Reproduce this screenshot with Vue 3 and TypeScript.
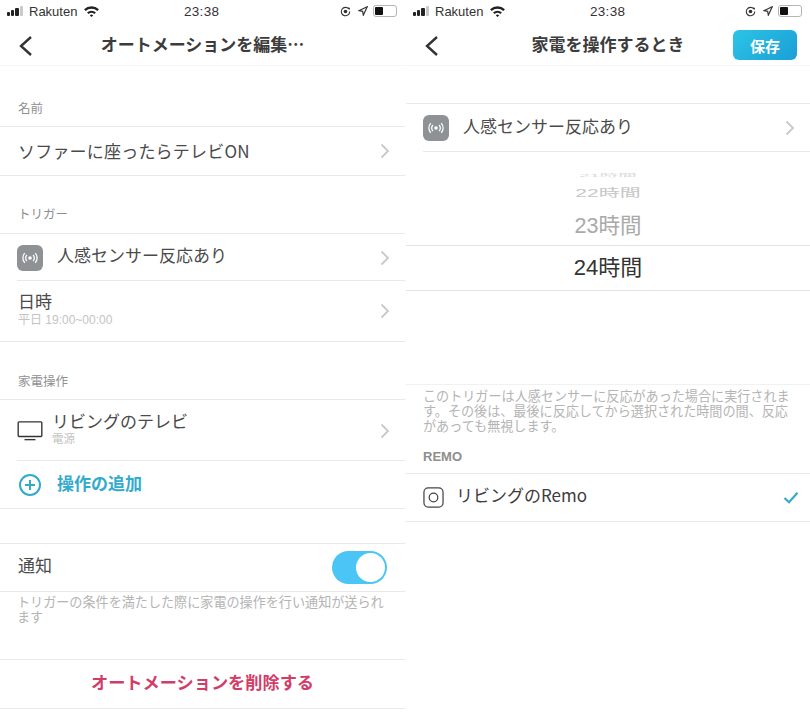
<script setup lang="ts">
const wifiPaths = [
  'M1 4.6a11.6 11.6 0 0 1 16 0l-1.7 1.8a9.2 9.2 0 0 0-12.6 0z',
  'M4.2 8a7 7 0 0 1 9.6 0l-1.7 1.8a4.6 4.6 0 0 0-6.2 0z',
  'M7.2 11.2a2.6 2.6 0 0 1 3.6 0L9 13z',
]
</script>

<template>
  <div class="screen">
    <!-- 左: オートメーション編集 -->
    <section class="phone">
      <div class="status">
        <div class="status_left">
          <span class="bars"><i class="b1"></i><i class="b2"></i><i class="b3"></i><i class="b4"></i></span>
          <span class="carrier">Rakuten</span>
          <svg class="wifi" viewBox="0 0 18 14"><path v-for="d in wifiPaths" :key="d" :d="d" /></svg>
        </div>
        <span class="clock">23:38</span>
        <div class="status_right">
          <svg class="lock" viewBox="0 0 12 12"><path d="M9.6 3.2A4.6 4.6 0 1 0 10.6 6" /><circle cx="6" cy="6" r="2" /><path class="fill" d="M8.4 1.4l2.6.8-1 2.4z" /></svg>
          <svg class="arrow" viewBox="0 0 12 12"><path d="M11 1L1 5.6l4.6.8.8 4.6z" /></svg>
          <span class="battery"><i></i></span>
        </div>
      </div>
      <header class="nav">
        <svg class="back" viewBox="0 0 16 22"><path d="M13 2L3 11l10 9" /></svg>
        <h1 class="nav_title">オートメーションを編集…</h1>
      </header>

      <div class="label first">名前</div>
      <div class="group">
        <div class="row name_row">
          <span class="row_text wide">ソファーに座ったらテレビON</span>
          <svg class="chev" viewBox="0 0 10 16"><path d="M1.5 1.5L8 8l-6.5 6.5" /></svg>
        </div>
      </div>

      <div class="label trig">トリガー</div>
      <div class="group">
        <div class="row sensor_row inset">
          <span class="sensor">
            <svg viewBox="0 0 20 20"><circle cx="10" cy="10" r="2" class="dot" /><path d="M6.6 6.6a4.8 4.8 0 0 0 0 6.8M13.4 6.6a4.8 4.8 0 0 1 0 6.8M4.2 4.6a8 8 0 0 0 0 10.8M15.8 4.6a8 8 0 0 1 0 10.8" /></svg>
          </span>
          <span class="row_text lift">人感センサー反応あり</span>
          <svg class="chev" viewBox="0 0 10 16"><path d="M1.5 1.5L8 8l-6.5 6.5" /></svg>
        </div>
        <div class="row date_row">
          <div class="stack">
            <span class="row_text">日時</span>
            <span class="sub">平日 19:00~00:00</span>
          </div>
          <svg class="chev" viewBox="0 0 10 16"><path d="M1.5 1.5L8 8l-6.5 6.5" /></svg>
        </div>
      </div>

      <div class="label">家電操作</div>
      <div class="group">
        <div class="row tv_row inset">
          <svg class="tv" viewBox="0 0 28 22"><rect x="1" y="1" width="26" height="16" rx="1" /><path d="M8 20.5h12" /></svg>
          <div class="stack">
            <span class="row_text">リビングのテレビ</span>
            <span class="sub small">電源</span>
          </div>
          <svg class="chev" viewBox="0 0 10 16"><path d="M1.5 1.5L8 8l-6.5 6.5" /></svg>
        </div>
        <div class="row add_row">
          <svg class="plus" viewBox="0 0 24 24"><circle cx="12" cy="12" r="10" /><path d="M12 7v10M7 12h10" /></svg>
          <span class="add_text lift">操作の追加</span>
        </div>
      </div>

      <div class="group notify">
        <div class="row notify_row">
          <span class="row_text lift">通知</span>
          <span class="toggle"><i></i></span>
        </div>
      </div>
      <p class="note note_left">トリガーの条件を満たした際に家電の操作を行い通知が送られます</p>

      <div class="group">
        <div class="row delete_row"><span class="lift">オートメーションを削除する</span></div>
      </div>
    </section>

    <!-- 右: 家電を操作するとき -->
    <section class="phone phone_right">
      <div class="status">
        <div class="status_left">
          <span class="bars"><i class="b1"></i><i class="b2"></i><i class="b3"></i><i class="b4"></i></span>
          <span class="carrier">Rakuten</span>
          <svg class="wifi" viewBox="0 0 18 14"><path v-for="d in wifiPaths" :key="d" :d="d" /></svg>
        </div>
        <span class="clock">23:38</span>
        <div class="status_right">
          <svg class="lock" viewBox="0 0 12 12"><path d="M9.6 3.2A4.6 4.6 0 1 0 10.6 6" /><circle cx="6" cy="6" r="2" /><path class="fill" d="M8.4 1.4l2.6.8-1 2.4z" /></svg>
          <svg class="arrow" viewBox="0 0 12 12"><path d="M11 1L1 5.6l4.6.8.8 4.6z" /></svg>
          <span class="battery"><i></i></span>
        </div>
      </div>
      <header class="nav">
        <svg class="back" viewBox="0 0 16 22"><path d="M13 2L3 11l10 9" /></svg>
        <h1 class="nav_title">家電を操作するとき</h1>
        <button class="save">保存</button>
      </header>

      <div class="top_gap"></div>
      <div class="group no_bottom">
        <div class="row sensor_row tall inset">
          <span class="sensor">
            <svg viewBox="0 0 20 20"><circle cx="10" cy="10" r="2" class="dot" /><path d="M6.6 6.6a4.8 4.8 0 0 0 0 6.8M13.4 6.6a4.8 4.8 0 0 1 0 6.8M4.2 4.6a8 8 0 0 0 0 10.8M15.8 4.6a8 8 0 0 1 0 10.8" /></svg>
          </span>
          <span class="row_text lift">人感センサー反応あり</span>
          <svg class="chev" viewBox="0 0 10 16"><path d="M1.5 1.5L8 8l-6.5 6.5" /></svg>
        </div>
      </div>

      <div class="picker">
        <div class="pick p21">21時間</div>
        <div class="pick p22">22時間</div>
        <div class="pick p23">23時間</div>
        <div class="pick p24">24時間</div>
      </div>

      <p class="note note_right">このトリガーは人感センサーに反応があった場合に実行されます。その後は、最後に反応してから選択された時間の間、反応があっても無視します。</p>
      <div class="remo_label">REMO</div>
      <div class="group">
        <div class="row remo_row">
          <svg class="remo" viewBox="0 0 22 22"><rect x="1" y="1" width="20" height="20" rx="4.5" /><circle cx="11" cy="11" r="4.5" /></svg>
          <span class="row_text dark lift">リビングのRemo</span>
          <svg class="check" viewBox="0 0 16 13"><path d="M1.5 7l4.5 4.2L14.5 1.8" /></svg>
        </div>
      </div>
    </section>
  </div>
</template>

<style scoped>
.screen {
  display: flex;
  width: 810px;
  height: 719px;
  overflow: hidden;
  background: #fff;
  font-family: "Noto Sans CJK JP", "Liberation Sans", sans-serif;
  color: #3a3a3a;
}

.phone {
  width: 405px;
  flex: none;
  display: flex;
  flex-direction: column;
  box-sizing: border-box;
}
.phone_right {
  padding-left: 1px;
}

/* ステータスバー */
.status {
  height: 22px;
  display: flex;
  align-items: center;
  justify-content: space-between;
  padding: 0 8px 0 7px;
  position: relative;
  font-family: "Liberation Sans", sans-serif;
  font-size: 13px;
  color: #333;
}
.status_left,
.status_right {
  display: flex;
  align-items: center;
}
.bars {
  display: flex;
  align-items: flex-end;
  gap: 1px;
  width: 16px;
  height: 10px;
  margin-right: 6px;
}
.bars i {
  width: 3.2px;
  background: #222;
  border-radius: 1px;
}
.bars .b1 { height: 4px; }
.bars .b2 { height: 6px; }
.bars .b3 { height: 8px; }
.bars .b4 { height: 10px; background: #c9c9c9; }
.wifi {
  width: 17px;
  height: 13px;
  margin-left: 6px;
  fill: #222;
}
.clock {
  position: absolute;
  left: 184px;
  font-size: 13.5px;
  font-weight: 500;
  letter-spacing: 0.3px;
}
.lock {
  width: 11px;
  height: 11px;
  fill: none;
  stroke: #333;
  stroke-width: 1.2;
  margin-right: 7px;
}
.lock .fill {
  fill: #333;
  stroke: none;
}
.lock circle {
  fill: #333;
  stroke: none;
}
.arrow {
  width: 10px;
  height: 10px;
  fill: none;
  stroke: #333;
  stroke-width: 1.4;
  margin-right: 5px;
}
.battery {
  width: 24px;
  height: 12px;
  border: 1px solid #b5b5b5;
  border-radius: 3px;
  padding: 1px;
  box-sizing: border-box;
  display: flex;
}
.battery i {
  width: 8px;
  background: #111;
  border-radius: 1px;
}

/* ナビゲーション */
.nav {
  height: 43px;
  display: flex;
  align-items: center;
  justify-content: center;
  position: relative;
  border-bottom: 1px solid #f6f6f6;
  box-sizing: content-box;
}
.back {
  position: absolute;
  left: 18px;
  top: 13px;
  width: 16px;
  height: 22px;
  fill: none;
  stroke: #333;
  stroke-width: 2.4;
}
.nav_title {
  margin: 0;
  font-size: 17px;
  font-weight: 700;
  color: #3c3c3c;
}
.save {
  position: absolute;
  right: 13px;
  top: 8px;
  width: 64px;
  height: 30px;
  border: none;
  border-radius: 6px;
  background: linear-gradient(135deg, #2cc4e6, #1a9fd6);
  color: #fff;
  font-family: inherit;
  font-size: 15px;
  font-weight: 700;
  padding: 0;
}

/* セクション */
.label {
  height: 57px;
  box-sizing: border-box;
  display: flex;
  align-items: flex-end;
  padding: 0 0 10px 18px;
  font-size: 12.5px;
  line-height: 16px;
  color: #8f8f8f;
}
.label.first {
  height: 60px;
}
.label.trig {
  padding-bottom: 11px;
}
.group {
  border-top: 1px solid #e9e9e9;
  border-bottom: 1px solid #e9e9e9;
}
.no_bottom {
  border-bottom: none;
}
.row {
  display: flex;
  align-items: center;
  padding-left: 18px;
  position: relative;
  box-sizing: border-box;
}
.inset::after {
  content: "";
  position: absolute;
  left: 17px;
  right: 0;
  bottom: 0;
  height: 1px;
  background: #e9e9e9;
}
.row_text {
  font-size: 17px;
  line-height: 20px;
  color: #4a4a4a;
}
.wide {
  letter-spacing: 0.2px;
}
.lift {
  margin-bottom: 5px;
}
.dark {
  color: #3d3d3d;
}
.chev {
  position: absolute;
  right: 15px;
  top: 50%;
  width: 10px;
  height: 16px;
  margin-top: -8px;
  fill: none;
  stroke: #c9c9c9;
  stroke-width: 1.8;
}
.name_row {
  height: 48px;
}
.sensor_row {
  height: 47px;
}
.sensor_row.tall {
  height: 48px;
}
.date_row {
  height: 60px;
}
.tv_row {
  height: 61px;
}
.add_row {
  height: 47px;
}
.notify_row {
  height: 47px;
}
.delete_row {
  height: 48px;
  padding: 0;
  justify-content: center;
  font-size: 17.2px;
  font-weight: 700;
  color: #d23d68;
}
.stack {
  display: flex;
  flex-direction: column;
  padding-bottom: 4px;
}
.sub {
  margin-top: 2px;
  font-size: 12px;
  line-height: 14px;
  color: #c4c4c4;
  font-family: "Liberation Sans", "Noto Sans CJK JP", sans-serif;
}
.sub.small {
  font-size: 11.5px;
  line-height: 13px;
}

/* アイコン */
.sensor {
  width: 26px;
  height: 26px;
  border-radius: 6px;
  background: #8e9294;
  margin-right: 14px;
  margin-left: -1px;
  display: flex;
  align-items: center;
  justify-content: center;
}
.sensor svg {
  width: 18px;
  height: 18px;
  fill: none;
  stroke: #fff;
  stroke-width: 1.4;
}
.sensor .dot {
  fill: #fff;
  stroke: none;
}
.tv {
  width: 26px;
  height: 20px;
  margin: 0 9px 0 -1px;
  fill: none;
  stroke: #333;
  stroke-width: 1.5;
}
.plus {
  width: 24px;
  height: 24px;
  margin-right: 15px;
  fill: none;
  stroke: #31aacb;
  stroke-width: 2;
}
.add_text {
  font-size: 17px;
  font-weight: 700;
  color: #33abcc;
}

/* 通知 */
.notify {
  margin-top: 34px;
}
.toggle {
  position: absolute;
  right: 18px;
  top: 7px;
  width: 55px;
  height: 33px;
  border-radius: 17px;
  background: #4bc4f6;
  display: flex;
  align-items: center;
  justify-content: flex-end;
  padding-right: 2px;
  box-sizing: border-box;
}
.toggle i {
  width: 29px;
  height: 29px;
  border-radius: 50%;
  background: #fff;
}
.note {
  margin: 0;
  font-size: 13.1px;
  line-height: 15px;
  color: #b4b4b4;
}
.note_left {
  height: 67px;
  padding: 2px 18px 0 17px;
  box-sizing: border-box;
}

/* 右カラム */
.top_gap {
  height: 37px;
}
.picker {
  height: 233px;
  position: relative;
  border-bottom: 1px solid #f1f1f1;
  box-sizing: border-box;
}
.picker::before {
  content: "";
  position: absolute;
  left: 0;
  right: 0;
  top: 93px;
  height: 44px;
  border-top: 1px solid #e2e2e2;
  border-bottom: 1px solid #e2e2e2;
}
.pick {
  position: absolute;
  left: 0;
  right: 0;
  text-align: center;
  font-family: "Liberation Sans", "Noto Sans CJK JP", sans-serif;
  line-height: 24px;
}
.p21 {
  top: 14px;
  font-size: 18.5px;
  line-height: 20px;
  color: #d8d8d8;
  transform: scaleY(0.22);
}
.p22 {
  top: 29px;
  font-size: 21px;
  color: #c6c6c6;
  transform: scaleY(0.55);
}
.p23 {
  top: 62px;
  font-size: 21.5px;
  color: #a9a9a9;
}
.p24 {
  top: 104px;
  font-size: 22px;
  color: #333;
}
.note_right {
  padding: 3px 18px 0 17px;
  height: 58px;
  box-sizing: border-box;
}
.remo_label {
  height: 30px;
  box-sizing: border-box;
  padding: 5px 0 0 17px;
  font-family: "Liberation Sans", sans-serif;
  font-size: 13px;
  line-height: 18px;
  font-weight: 700;
  color: #8e8e8e;
}
.remo_row {
  height: 47px;
  padding-left: 17px;
}
.remo {
  width: 21px;
  height: 21px;
  margin-right: 12px;
  fill: none;
  stroke: #444;
  stroke-width: 1.3;
}
.check {
  position: absolute;
  right: 11px;
  top: 17px;
  width: 16px;
  height: 13px;
  fill: none;
  stroke: #38a9c6;
  stroke-width: 2.2;
}
</style>
